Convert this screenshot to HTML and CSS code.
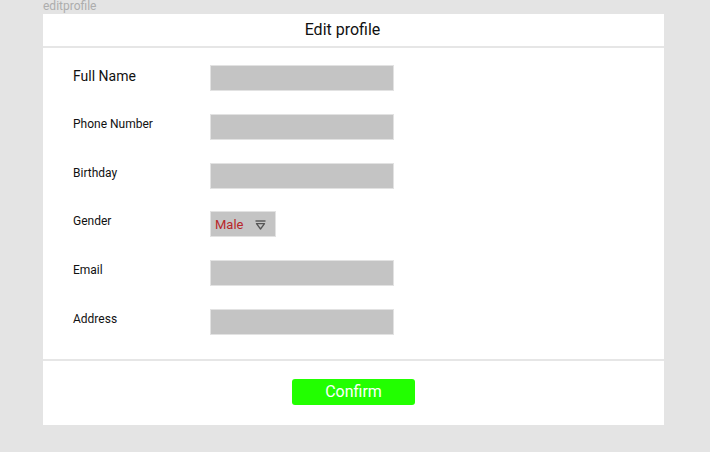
FILE: index.html
```html
<!DOCTYPE html>
<html lang="en">
<head>
<meta charset="utf-8">
<title>editprofile</title>
<link rel="stylesheet" href="styles.css">
</head>
<body>
<div class="page">
  <div class="caption">editprofile</div>
  <div class="card">
    <div class="card-header">Edit profile</div>
    <div class="form">
      <div class="label label-lg">Full Name</div>
      <div class="input"></div>
      <div class="label">Phone Number</div>
      <div class="input"></div>
      <div class="label">Birthday</div>
      <div class="input"></div>
      <div class="label">Gender</div>
      <div class="select">
        <span class="select-value">Male</span>
        <svg class="select-icon" width="11" height="10" viewBox="0 0 11 10" aria-hidden="true">
          <line x1="0.5" y1="1" x2="10.5" y2="1" stroke="#555" stroke-width="1.4"/>
          <path d="M1.5 3.6 H9.5 L5.5 9 Z" fill="none" stroke="#555" stroke-width="1.3" stroke-linejoin="round"/>
        </svg>
      </div>
      <div class="label">Email</div>
      <div class="input"></div>
      <div class="label">Address</div>
      <div class="input"></div>
    </div>
    <div class="card-footer">
      <button class="btn-confirm" type="button">Confirm</button>
    </div>
  </div>
</div>
</body>
</html>
```
FILE: styles.css
```css
html, body {
  margin: 0;
  padding: 0;
  background: #e4e4e4;
  font-family: Roboto, "Liberation Sans", sans-serif;
}

.page {
  padding-left: 43px;
  width: 621px;
}

.caption {
  height: 14px;
  font-size: 12px;
  line-height: 12px;
  color: #adadad;
}

.card {
  background: #ffffff;
}

.card-header {
  height: 32px;
  line-height: 32px;
  text-align: center;
  font-size: 16px;
  color: #111;
  padding-right: 22px;
  border-bottom: 2px solid #e6e6e6;
}

.form {
  display: grid;
  grid-template-columns: 137px 1fr;
  grid-auto-rows: 26px;
  row-gap: 22.8px;
  padding: 17px 0 24px 30px;
}

.label {
  font-size: 12px;
  line-height: 20px;
  color: #111;
}

.label-lg {
  font-size: 14px;
  line-height: 22px;
}

.input {
  width: 182px;
  height: 24px;
  background: #c4c4c4;
  border: 1px solid #e2e2e2;
}

.select {
  width: 60px;
  height: 24px;
  background: #c4c4c4;
  border: 1px solid #e2e2e2;
  display: flex;
  align-items: center;
  padding-left: 4px;
}

.select-value {
  font-size: 13px;
  color: #b8272b;
  margin-top: 1px;
}

.select-icon {
  margin-left: 12px;
  margin-top: 1px;
}

.card-footer {
  border-top: 2px solid #e6e6e6;
  height: 66px;
  display: flex;
  justify-content: center;
  align-items: flex-start;
  padding-top: 18px;
  box-sizing: border-box;
}

.btn-confirm {
  width: 123px;
  height: 26px;
  background: #22ff00;
  border: none;
  border-radius: 3px;
  color: #ffffff;
  font-family: Roboto, "Liberation Sans", sans-serif;
  font-size: 16px;
  padding: 0;
}
```
